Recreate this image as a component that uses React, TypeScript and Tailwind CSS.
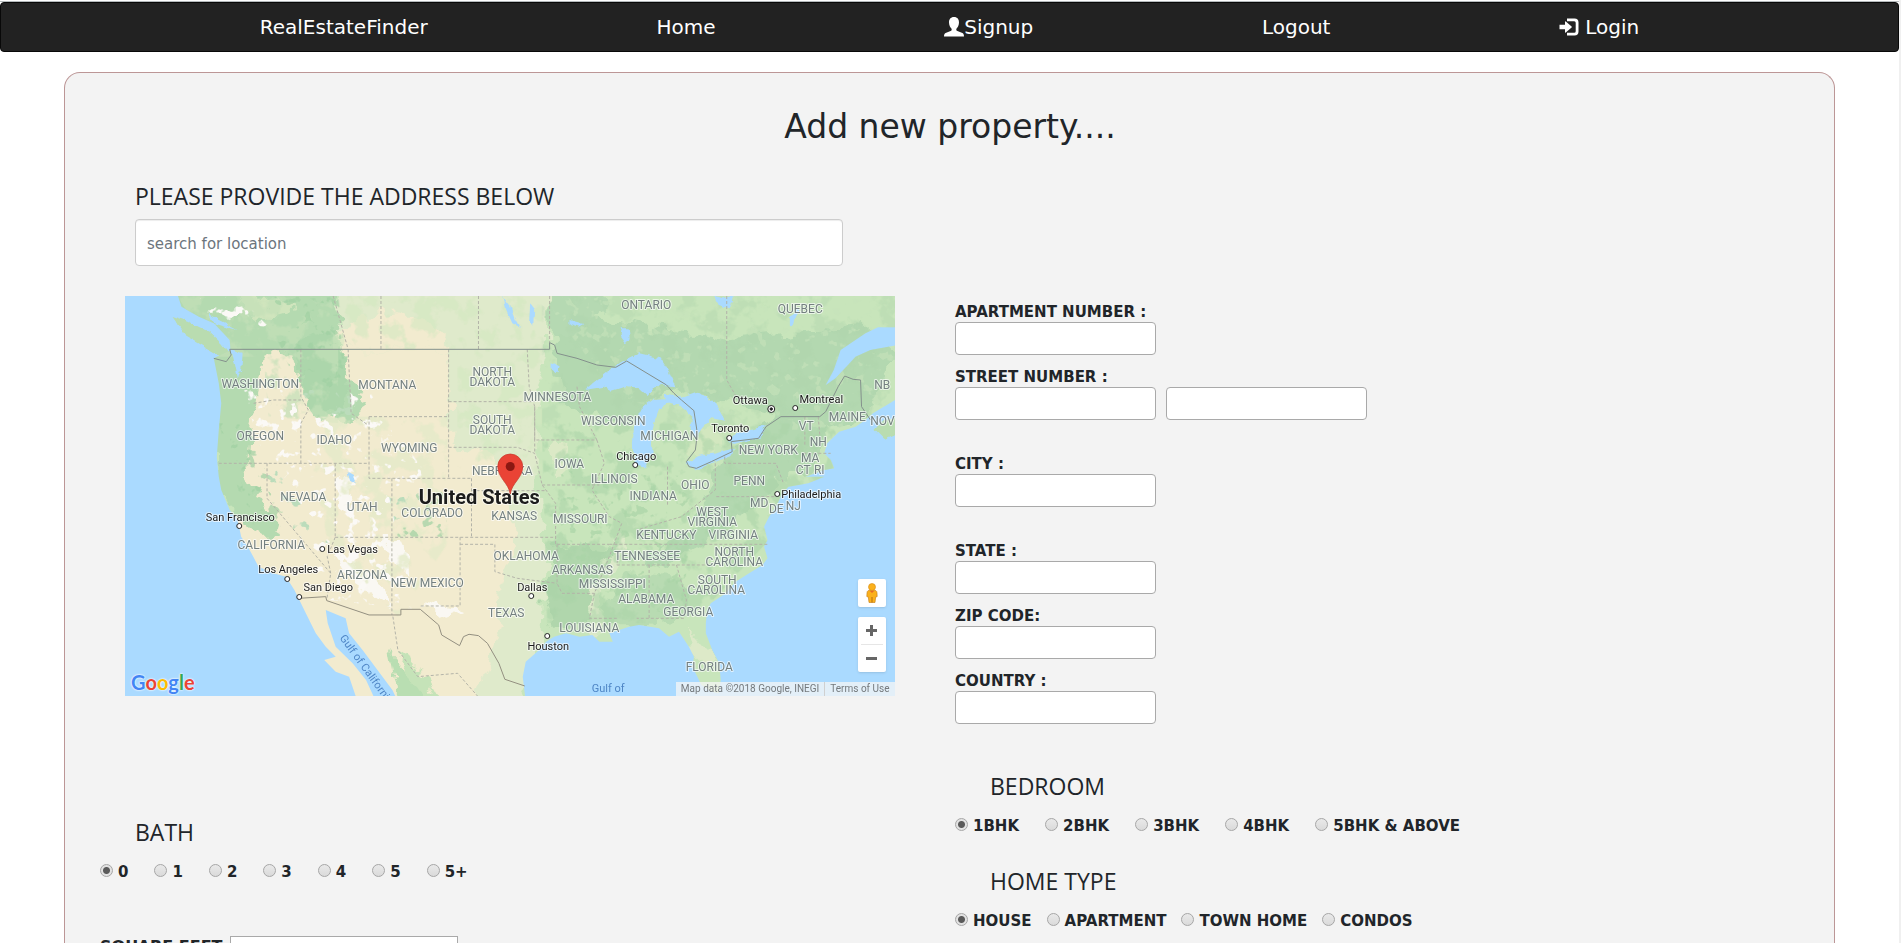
import type { ReactNode } from "react";

type Label = [text: string, x: number, y: number];

const STATES: Label[] = [
  ["WASHINGTON", 136, 88], ["OREGON", 136, 140], ["IDAHO", 210, 144], ["MONTANA", 263, 89],
  ["WYOMING", 285, 152], ["NORTH", 368, 76], ["DAKOTA", 368, 86], ["SOUTH", 368, 124],
  ["DAKOTA", 368, 134], ["NEBRASKA", 378, 175], ["MINNESOTA", 433, 101], ["WISCONSIN", 489, 125],
  ["MICHIGAN", 545, 140], ["IOWA", 445, 168], ["ILLINOIS", 490, 183], ["INDIANA", 529, 200],
  ["OHIO", 571, 189], ["PENN", 625, 185], ["NEW YORK", 644, 154], ["VT", 682, 130],
  ["NH", 694, 146], ["MA", 686, 162], ["CT", 679, 174], ["RI", 695, 174], ["MAINE", 723, 121], ["NB", 758, 89],
  ["ONTARIO", 522, 9], ["QUEBEC", 676, 13], ["MD", 635, 207],
  ["DE", 652, 213], ["NJ", 669, 210], ["WEST", 588, 216], ["VIRGINIA", 588, 226],
  ["KENTUCKY", 542, 239], ["VIRGINIA", 609, 239], ["TENNESSEE", 523, 260], ["NORTH", 610, 256],
  ["CAROLINA", 610, 266], ["SOUTH", 593, 284], ["CAROLINA", 592, 294], ["ARKANSAS", 458, 274],
  ["MISSISSIPPI", 488, 288], ["ALABAMA", 522, 303], ["GEORGIA", 564, 316], ["LOUISIANA", 465, 332],
  ["FLORIDA", 585, 371], ["TEXAS", 382, 317], ["OKLAHOMA", 402, 260], ["KANSAS", 390, 220],
  ["MISSOURI", 456, 223], ["COLORADO", 308, 217], ["UTAH", 238, 211], ["NEVADA", 179, 201],
  ["CALIFORNIA", 147, 249], ["ARIZONA", 238, 279], ["NEW MEXICO", 303, 287],
];

const CITIES: { name: string; x: number; y: number; dot: [number, number]; anchor?: "start" }[] = [
  { name: "San Francisco", x: 116, y: 221, dot: [115, 230] },
  { name: "Las Vegas", x: 203, y: 253, dot: [198, 253], anchor: "start" },
  { name: "Los Angeles", x: 164, y: 273, dot: [163, 283] },
  { name: "San Diego", x: 204, y: 291, dot: [175, 301] },
  { name: "Dallas", x: 408, y: 291, dot: [407, 300] },
  { name: "Houston", x: 424, y: 350, dot: [423, 340] },
  { name: "Chicago", x: 512, y: 160, dot: [511, 169] },
  { name: "Toronto", x: 606, y: 132, dot: [605, 142] },
  { name: "Ottawa", x: 626, y: 104, dot: [647, 113] },
  { name: "Montreal", x: 697, y: 103, dot: [671, 112] },
  { name: "Philadelphia", x: 657, y: 198, dot: [653, 198], anchor: "start" },
];

const LAND =
  "M118,18 L125,50 L160,80 L190,100 L222,150 L224,180 L190,205 L200,280 L205,340 L200,420 L196,500 L200,560 L205,600 L222,660 L238,690 L245,740 L262,780 L280,830 L310,850 L335,860 L352,900 L362,930 L375,970 L395,1030 L415,1070 L435,1100 L412,1110 L435,1145 L462,1160 L476,1222 L512,1222 L496,1170 L469,1120 L435,1070 L419,1000 L415,960 L455,985 L462,1030 L489,1080 L519,1140 L549,1200 L556,1222 L816,1222 L811,1160 L817,1115 L844,1080 L858,1055 L874,1040 L898,1030 L925,1040 L951,1035 L965,1055 L992,1055 L985,1030 L1005,1020 L1025,1010 L1045,1005 L1085,1015 L1105,1040 L1125,1025 L1145,1070 L1155,1100 L1152,1130 L1162,1160 L1170,1185 L1190,1205 L1205,1210 L1209,1170 L1206,1120 L1192,1080 L1179,1030 L1179,1000 L1182,960 L1189,940 L1219,910 L1239,875 L1266,850 L1293,825 L1303,805 L1296,770 L1303,750 L1296,710 L1306,680 L1320,650 L1333,610 L1345,590 L1385,580 L1417,560 L1380,560 L1417,540 L1437,535 L1430,510 L1417,490 L1423,460 L1447,425 L1480,410 L1500,390 L1515,370 L1565,325 L1565,165 L1510,180 L1480,200 L1440,265 L1420,285 L1436,240 L1450,180 L1500,130 L1525,112 L1565,112 L1565,10 L118,10 Z";

const STATE_LINES =
  "M200,520 H502 M502,380 H662 M502,380 V565 H708 M662,178 V565 M297,520 V625 L425,850 L417,930 M434,520 V742 M365,178 V320 L380,360 L365,400 V520 M548,565 V975 M434,742 H877 M434,742 L418,800 L425,850 M708,565 V742 M708,602 H860 M685,742 V948 H605 M685,763 H755 V845 L800,865 L880,880 M662,335 H835 M662,472 H800 L835,490 L850,585 L877,640 V763 M835,350 V450 H960 M820,178 L824,290 L835,350 V490 M270,340 L310,330 H365 M430,18 L460,178 M460,178 L466,370 L500,405 M850,585 H965 M880,763 H985 M880,763 V880 L890,910 H955 M1000,825 H1200 M985,763 H1305 M1065,825 V990 M1120,825 L1140,930 L1135,985 H1040 M1102,530 V650 M1198,520 V600 L1130,680 L1040,720 M1217,500 V520 H1320 L1335,580 M1200,620 H1320 M722,18 V178 M526,18 V178 M865,18 V158 M1221,18 V270 L1240,320 M960,450 L975,520 L950,600 L985,680 L1010,700 L985,800 L955,910 L945,985 H1000 M920,290 L925,350 L960,450 M1378,380 V470 M1405,380 L1410,470 M1375,490 H1430 M550,980 L560,1080 L600,1160 L680,1150 L720,1218 M1005,780 L1000,825";

const US_CANADA =
  "M190,205 L215,215 L225,195 L222,178 L865,178 V158 L875,165 L880,190 L920,205 L960,225 L998,232 L1020,213 L1100,285 L1115,310 L1130,330 L1155,362 L1162,430 L1158,480 L1140,515 L1145,530 L1160,535 L1190,515 L1232,485 L1230,455 L1285,445 L1300,410 L1330,380 L1408,380 L1420,365 L1445,290 L1458,258 L1475,268 L1490,270 L1492,350 L1510,390";

const US_MEXICO =
  "M362,925 L415,920 L417,932 L502,975 L566,975 V958 H605 L642,1005 L648,1035 L684,1067 L692,1040 L703,1033 L722,1037 L740,1060 L763,1120 L775,1168 L815,1188";

const LAKES = [
  "M935,300 L985,240 L1010,215 L1045,190 L1088,205 L1105,245 L1118,292 L1080,285 L1062,318 L1045,295 L1020,288 L990,302 L975,290 Z",
  "M1040,528 L1032,470 L1035,400 L1050,355 L1072,330 L1115,326 L1085,360 L1075,400 L1070,440 L1072,490 L1057,532 Z",
  "M1095,310 L1135,322 L1165,306 L1198,340 L1218,392 L1190,385 L1172,410 L1160,445 L1148,415 L1152,380 L1128,348 L1100,335 Z",
  "M1138,522 L1165,497 L1200,490 L1238,473 L1228,499 L1190,520 L1158,541 Z",
  "M1226,455 L1240,430 L1270,420 L1298,406 L1290,442 L1260,452 L1236,462 Z",
  "M772,18 L785,45 L795,85 L804,110 L790,100 L778,60 Z",
  "M826,40 L834,55 L832,108 L824,95 Z",
  "M1195,18 L1215,25 L1235,18 L1225,55 L1205,45 Z",
  "M1010,115 h14 l2,30 l-10,15 l-9,-18 Z",
  "M905,90 l30,12 l-10,8 l-20,-8 Z",
  "M458,545 L470,555 L474,578 L464,572 Z",
  "M867,220 l16,10 l-2,14 l-14,-8 Z",
  "M1348,85 l8,-20 l10,-10 l-10,50 l-8,6 Z",
];

function TerrainMap() {
  return (
    <svg
      className="block h-full w-full"
      viewBox="0 0 771 400"
      preserveAspectRatio="xMidYMid slice"
      role="img"
      aria-label="Map of the United States"
    >
      <defs>
        <filter id="rough" x="0" y="0" width="100%" height="100%">
          <feTurbulence type="fractalNoise" baseFrequency="0.06" numOctaves={3} seed={4} />
          <feDisplacementMap in="SourceGraphic" scale={22} xChannelSelector="R" yChannelSelector="G" />
        </filter>
        <filter id="coast" x="0" y="0" width="100%" height="100%">
          <feTurbulence type="fractalNoise" baseFrequency="0.15" numOctaves={2} seed={9} />
          <feDisplacementMap in="SourceGraphic" scale={5} xChannelSelector="R" yChannelSelector="G" />
        </filter>
        <filter id="patches" x="0" y="0" width="100%" height="100%">
          <feTurbulence type="fractalNoise" baseFrequency="0.045" numOctaves={4} seed={12} />
          <feColorMatrix values="0 0 0 0 0  0 0 0 0 0  0 0 0 0 0  9 0 0 0 -4.6" result="mask" />
          <feComposite in="SourceGraphic" in2="mask" operator="in" />
        </filter>
        <filter id="specks" x="0" y="0" width="100%" height="100%">
          <feTurbulence type="fractalNoise" baseFrequency="0.09" numOctaves={3} seed={31} />
          <feColorMatrix values="0 0 0 0 0  0 0 0 0 0  0 0 0 0 0  0 12 0 0 -7.4" result="mask" />
          <feComposite in="SourceGraphic" in2="mask" operator="in" />
        </filter>
        <clipPath id="land">
          <path transform="scale(0.4975 0.3333) translate(-10 -18)" d={LAND} />
        </clipPath>
      </defs>

      <rect width="771" height="400" fill="#aadaff" />
      <g filter="url(#coast)">
        <g transform="scale(0.4975 0.3333) translate(-10 -18)" fill="#b9dcb0">
          <path d="M105,78 L135,92 L180,125 L205,160 L224,195 L205,200 L175,175 L135,140 L118,105 Z" />
          <path d="M1518,420 L1530,398 L1565,375 V432 L1538,450 Z" />
        </g>
      </g>

      <g clipPath="url(#land)">
        <g filter="url(#rough)">
          <g transform="scale(0.4975 0.3333) translate(-10 -18)">
            <rect x="-60" y="-60" width="1700" height="1360" fill="#c8e5bb" />
            <path d="M440,-40 H860 V178 L835,350 L840,560 L860,760 L850,900 L845,1100 L780,1300 H420 Z" fill="#dfeacb" />
            <path d="M250,178 H660 L668,300 L670,470 L760,500 L790,640 L800,760 L760,900 L770,1010 L700,1300 H360 L230,700 L255,560 L262,300 Z" fill="#f2ebcf" />
            <path d="M455,90 L560,70 L640,120 L670,178 H445 Z" fill="#f2ebcf" />
            <path d="M100,-40 H430 L440,110 L450,200 L470,300 L500,330 L470,400 L400,380 L365,300 L350,190 L290,190 L280,300 L262,420 L255,560 L285,640 L330,740 L290,740 L240,690 L190,560 L180,200 L90,60 Z" fill="#b4dab0" />
            <path d="M360,150 L430,120 L460,260 L450,380 L400,370 L370,320 Z" fill="#acd6ab" />
            <path d="M240,20 H330 L350,60 L280,90 Z" fill="#d0e5bd" />
            <path d="M865,60 L1000,90 L1110,120 L1230,150 L1350,130 L1500,110 L1560,190 L1500,390 L1420,420 L1400,540 L1330,560 L1200,560 L1220,490 L1320,370 L1200,330 L1120,290 L1080,330 L1030,400 L960,390 L890,320 Z" fill="#b3d8b0" />
            <path d="M860,-40 H960 L980,60 L900,150 L865,150 Z" fill="#b5d9b2" />
            <path d="M1210,520 L1330,520 L1310,600 L1240,690 L1180,760 L1090,830 L1060,800 L1150,720 Z" fill="#b3d8b0" />
            <path d="M875,760 L985,780 L960,900 L930,1000 L870,1010 L850,920 Z" fill="#b0d6ac" />
            <path d="M1010,850 L1130,870 L1160,980 L1060,1000 L960,1000 Z" fill="#b8dbb2" />
            <path d="M1000,740 L970,820 L945,930 L940,1030 L965,1030 L970,920 L1010,810 L1030,740 Z" fill="#dbe9c8" />
            <path d="M1140,430 L1220,400 L1210,470 L1150,500 Z" fill="#d2e7bf" />
            <path d="M1140,1010 L1170,1060 L1195,1100 L1180,1130 L1150,1080 Z" fill="#dde9c8" />
            <path d="M870,460 L905,455 L900,560 L880,560 Z" fill="#dbe9c6" />
            <path d="M560,1080 L600,1120 L640,1230 H590 Z" fill="#c5e3b8" />
            <path d="M540,1080 L570,1130 L620,1240 H560 Z" fill="#b9deb2" />
            <path d="M440,560 L470,600 L455,660 L435,640 Z M430,790 L510,850 L550,960 L480,890 Z M520,740 L580,790 L585,850 L540,810 Z M600,930 L690,960 L640,990 Z" fill="#faf8f3" />
          </g>
        </g>
        <g filter="url(#patches)">
          <g transform="scale(0.4975 0.3333) translate(-10 -18)">
            <path d="M850,400 H1560 L1300,760 L1150,1000 H860 Z" fill="#a9d3a8" opacity="0.55" />
            <path d="M850,0 H1560 V400 H850 Z" fill="#aed5ac" opacity="0.4" />
            <path d="M430,0 H850 V560 H680 V178 H430 Z" fill="#d2e8c0" opacity="0.6" />
            <path d="M110,0 H440 V400 L300,380 L290,200 L190,200 Z" fill="#c3e0b8" opacity="0.7" />
            <path d="M370,380 H660 V760 L560,980 L420,760 Z" fill="#e4eac8" opacity="0.8" />
          </g>
        </g>
        <g filter="url(#specks)">
          <g transform="scale(0.4975 0.3333) translate(-10 -18)">
            <path d="M140,20 H240 L300,110 L200,100 Z M250,300 H500 L620,560 L540,760 L600,960 L420,930 L300,560 Z" fill="#fbf9f6" />
            <path d="M280,20 H440 L470,380 L380,360 Z M540,600 L650,600 L660,740 L560,740 Z M200,400 L250,400 L420,760 L260,700 Z" fill="#9fd0a2" opacity="0.7" />
            <path d="M850,20 H1560 V420 H1240 L1000,320 Z" fill="#c6e3ba" opacity="0.6" />
            <path d="M880,540 L1160,560 L1130,980 L890,900 Z" fill="#a9d4a7" opacity="0.7" />
          </g>
        </g>
      </g>

      <g filter="url(#coast)">
        <g transform="scale(0.4975 0.3333) translate(-10 -18)" fill="#aadaff">
          {LAKES.map((d) => <path key={d} d={d} />)}
          <path d="M225,178 L248,190 L245,240 L238,262 L232,220 Z M175,70 L215,100 L235,120 L190,100 Z" />
        </g>
      </g>

      <g transform="scale(0.4975 0.3333) translate(-10 -18)" fill="none" strokeLinejoin="round">
        <path d={STATE_LINES} stroke="#b3b3a8" strokeWidth="1" strokeDasharray="3 2" vectorEffect="non-scaling-stroke" />
        <path d={US_CANADA} stroke="#84908c" strokeWidth="1" vectorEffect="non-scaling-stroke" />
        <path d={US_MEXICO} stroke="#938f80" strokeWidth="1" vectorEffect="non-scaling-stroke" />
      </g>

      <g
        fontFamily="Roboto, 'Liberation Sans', sans-serif"
        textAnchor="middle"
        stroke="#ffffff"
        strokeOpacity="0.65"
        strokeWidth="2"
        strokeLinejoin="round"
        style={{ paintOrder: "stroke" }}
      >
        <g fontSize="12" fill="#748080">
          {STATES.map(([text, x, y]) => <text key={`${text}-${x}-${y}`} x={x} y={y + 4}>{text}</text>)}
          <text x="746" y="129" textAnchor="start">NOV</text>
        </g>
        <g fontSize="11" fill="#4f86c6" strokeOpacity="0">
          <text transform="translate(215 342) rotate(54)" textAnchor="start">Gulf of California</text>
          <text x="484" y="396">Gulf of</text>
          <text x="484" y="408">Mexico</text>
        </g>
        <g fontSize="11" fill="#1c1c1c">
          {CITIES.map((c) => <text key={c.name} x={c.x} y={c.y + 4} textAnchor={c.anchor}>{c.name}</text>)}
        </g>
        <text x="355" y="208" fontSize="20" fontWeight="700" fill="#1c1c1c">United States</text>
      </g>
      <g fill="#ffffff" stroke="#222222" strokeWidth="1">
        {CITIES.map((c) => <circle key={c.name} cx={c.dot[0]} cy={c.dot[1]} r="2.5" />)}
        <circle cx="647" cy="113" r="3.5" />
        <circle cx="647" cy="113" r="1.2" fill="#222222" />
      </g>

      <path
        d="M386,198 C384.500,187 373.500,182 373.500,170.500 A12.500,12.500 0 0 1 398.500,170.500 C398.500,182 387.500,187 386,198 Z"
        fill="#ea4335"
        stroke="#c5352a"
        strokeWidth="0.7"
      />
      <circle cx="386" cy="170.500" r="4.500" fill="#8b1812" />
    </svg>
  );
}

function Pegman() {
  return (
    <svg className="h-5 w-3" viewBox="0 0 12 20" aria-hidden="true">
      <path d="M2.200,7.600 Q1,8.200 1,10 L0.800,13.500 L2.300,14 L3,19.500 H9 L9.700,14 L11.200,13.500 L11,10 Q11,8.200 9.800,7.600 Z" fill="#fbb11c" stroke="#c27b12" strokeWidth="0.6" />
      <path d="M5.400,14 h1.200 v5.500 h-1.200 Z" fill="#c27b12" />
      <path d="M3.500,7.500 H8.500 L6,10 Z" fill="#e5672b" />
      <circle cx="6" cy="4" r="3.500" fill="#fbb11c" stroke="#d58a14" strokeWidth="0.6" />
    </svg>
  );
}

function MapPanel() {
  return (
    <section aria-label="Map" className="relative ml-[25px] h-[400px] w-[90%] overflow-hidden font-[Roboto,'Liberation_Sans',sans-serif]">
      <TerrainMap />
      <a
        href="#google"
        className="absolute bottom-0 left-[6px] font-[Lato,sans-serif] text-[20px] leading-[28px] font-bold [text-shadow:0_0_2px_#fff,0_0_2px_#fff]"
      >
        <span className="text-[#4285f4]">G</span>
        <span className="text-[#ea4335]">o</span>
        <span className="text-[#fbbc05]">o</span>
        <span className="text-[#4285f4]">g</span>
        <span className="text-[#34a853]">l</span>
        <span className="text-[#ea4335]">e</span>
      </a>
      <div className="absolute right-[9px] bottom-6 flex flex-col gap-[10px]">
        <button type="button" aria-label="Street View" className="flex size-7 items-center justify-center rounded-[2px] bg-white shadow">
          <Pegman />
        </button>
        <div className="flex w-7 flex-col items-center rounded-[2px] bg-white shadow">
          <button type="button" aria-label="Zoom in" className="flex h-[27px] w-full items-center justify-center">
            <svg className="size-[11px]" viewBox="0 0 11 11" aria-hidden="true">
              <path d="M0,5.500 H11 M5.500,0 V11" stroke="#666666" strokeWidth="3" />
            </svg>
          </button>
          <div className="h-px w-[22px] bg-[#e6e6e6]" />
          <button type="button" aria-label="Zoom out" className="flex h-[27px] w-full items-center justify-center">
            <svg className="size-[11px]" viewBox="0 0 11 11" aria-hidden="true">
              <path d="M0,5.500 H11" stroke="#666666" strokeWidth="3" />
            </svg>
          </button>
        </div>
      </div>
      <div className="absolute right-0 bottom-0 flex h-[14px] items-center bg-[#f5f5f5]/75 text-[10px] leading-[14px] text-[#74797d]">
        <span className="px-[5px]">Map data ©2018 Google, INEGI</span>
        <a href="#terms" className="border-l border-[#d0d0d0] px-[5px]">Terms of Use</a>
      </div>
    </section>
  );
}

function Field({ id, label, children }: { id: string; label: string; children?: ReactNode }) {
  return (
    <div className="mb-[10px]">
      <label htmlFor={id} className="block pt-0.5 leading-5 font-bold">{label}</label>
      <div className="flex gap-[10px]">
        <input id={id} type="text" className="h-[33px] w-[201px] rounded-[4px] border border-[#a9a9a9] bg-white px-2" />
        {children}
      </div>
    </div>
  );
}

function RadioRow({ name, options, compact }: { name: string; options: string[]; compact?: boolean }) {
  return (
    <div className={`mt-[15px] flex leading-[22px] font-bold ${compact ? "gap-[15px]" : "gap-[26px]"}`}>
      {options.map((option, i) => (
        <label key={option} className="flex gap-[5px] whitespace-nowrap">
          <input
            type="radio"
            name={name}
            defaultChecked={i === 0}
            className="mt-[3px] size-[13px] shrink-0 appearance-none rounded-full border border-[#a6a6a6] bg-linear-to-b from-[#e9e9e9] to-[#dadada] checked:bg-[radial-gradient(circle,#5a5a5a_0_3px,#e2e2e2_4px)]"
          />
          {option}
        </label>
      ))}
    </div>
  );
}

const HEADING = "font-['Open_Sans','Noto_Sans',sans-serif] text-[23px] leading-[28px]";

function UserIcon() {
  return (
    <svg className="size-5" viewBox="0 0 20 20" fill="currentColor" aria-hidden="true">
      <path d="M10,0 C6.600,0 4.900,2.400 5,5.600 C5.100,8.500 6.300,10.600 7.400,11.600 C7.900,12.100 7.800,13.300 7.200,13.700 L1.600,16 C0.500,16.600 0,17.500 0,19.500 H20 C20,17.500 19.500,16.600 18.400,16 L12.800,13.700 C12.200,13.300 12.100,12.100 12.600,11.600 C13.700,10.600 14.900,8.500 15,5.600 C15.100,2.400 13.400,0 10,0 Z" />
    </svg>
  );
}

function LoginIcon() {
  return (
    <svg className="size-5" viewBox="0 0 20 20" fill="currentColor" aria-hidden="true">
      <path d="M8,1.500 H15.500 A4,4 0 0 1 19.500,5.500 V14.500 A4,4 0 0 1 15.500,18.500 H8 V15.800 H15.200 A1.500,1.500 0 0 0 16.700,14.300 V5.700 A1.500,1.500 0 0 0 15.200,4.200 H8 Z" />
      <path d="M0.500,7.800 H6 V4.700 Q6.100,4 6.800,4.500 L12.600,9.500 Q13.100,10 12.600,10.500 L6.800,15.500 Q6.100,16 6,15.300 V12.200 H0.500 Z" />
    </svg>
  );
}

export default function App() {
  return (
    <div className="border-r-2 border-[#f0f0f0] bg-white pt-px font-['DejaVu_Sans',Verdana,sans-serif] text-[15px] text-[#212529]">
      <nav className="border-t border-[#b5babc]">
        <ul className="flex h-[50px] items-center justify-evenly rounded-[4px] border border-[#080808] bg-[#222222] px-[30px] text-[20px] leading-[24px] text-white">
          <li><a href="#brand">RealEstateFinder</a></li>
          <li><a href="#home">Home</a></li>
          <li><a href="#signup" className="flex items-center"><UserIcon />Signup</a></li>
          <li><a href="#logout">Logout</a></li>
          <li><a href="#login" className="flex items-center gap-[6px]"><LoginIcon />Login</a></li>
        </ul>
      </nav>

      <form className="mx-16 mt-5 rounded-t-[16px] border border-b-0 border-[#bc9696] bg-[#f3f3f3] pt-[35px] pr-6 pb-6 pl-[35px]">
        <h1 className="pr-[10px] text-center text-[33px] leading-[38px]">Add new property....</h1>

        <div className="mt-9 ml-[35px] max-w-[708px]">
          <label htmlFor="location" className={`block ${HEADING}`}>PLEASE PROVIDE THE ADDRESS BELOW</label>
          <input
            id="location"
            type="text"
            placeholder="search for location"
            className="mt-[9px] h-[47px] w-full rounded-[4px] border border-[#cccccc] bg-white px-[11px] pt-0.5 shadow-[inset_0_1px_1px_rgba(0,0,0,0.075)] placeholder:text-[#6c757d]"
          />
        </div>

        <div className="mt-[30px] grid grid-cols-2">
          <div>
            <MapPanel />
            <h2 className={`mt-[122px] ml-[35px] ${HEADING}`}>BATH</h2>
            <RadioRow name="bath" options={["0", "1", "2", "3", "4", "5", "5+"]} />
            <div className="mt-[53px] flex items-start gap-[10px]">
              <label htmlFor="sqft" className="w-[120px] text-[16px] leading-[22px] font-bold whitespace-nowrap">SQUARE FEET</label>
              <input id="sqft" type="text" className="h-[33px] w-[228px] border border-[#a9a9a9] bg-white px-2" />
            </div>
          </div>

          <div className="pt-1">
            <Field id="apartment" label="APARTMENT NUMBER :" />
            <Field id="street" label="STREET NUMBER :">
              <input type="text" aria-label="Street name" className="h-[33px] w-[201px] rounded-[4px] border border-[#a9a9a9] bg-white px-2" />
            </Field>
            <div className="pt-[22px]"><Field id="city" label="CITY :" /></div>
            <div className="pt-[22px]"><Field id="state" label="STATE :" /></div>
            <Field id="zip" label="ZIP CODE:" />
            <Field id="country" label="COUNTRY :" />
            <h2 className={`mt-12 ml-[35px] ${HEADING}`}>BEDROOM</h2>
            <RadioRow name="bedroom" options={["1BHK", "2BHK", "3BHK", "4BHK", "5BHK & ABOVE"]} />
            <h2 className={`mt-[30px] ml-[35px] ${HEADING}`}>HOME TYPE</h2>
            <RadioRow name="home-type" options={["HOUSE", "APARTMENT", "TOWN HOME", "CONDOS"]} compact />
          </div>
        </div>
      </form>
    </div>
  );
}
